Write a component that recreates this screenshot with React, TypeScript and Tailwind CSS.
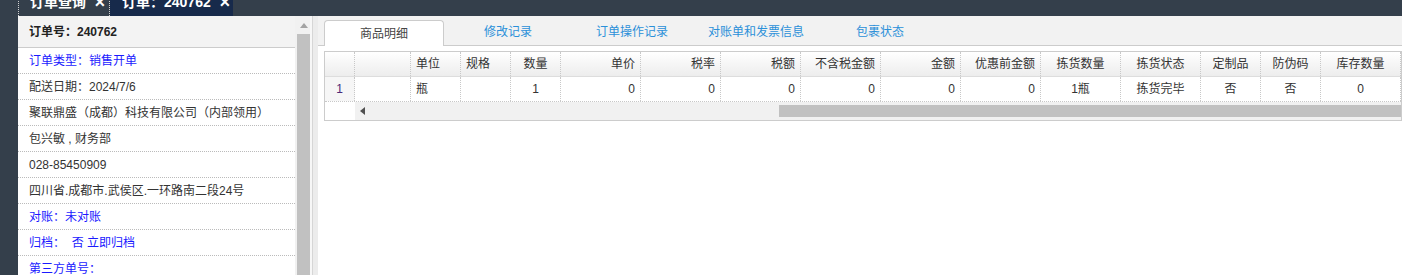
import React from "react";

const font = { fontFamily: '"Liberation Sans", "Noto Sans CJK SC", sans-serif' };

type Col = { title: string; w: string; align: string; value: string };

const cols: Col[] = [
    { title: "", w: "w-[56px]", align: "text-left", value: "" },
    { title: "单位", w: "w-[50px]", align: "text-left", value: "瓶" },
    { title: "规格", w: "w-[50px]", align: "text-left", value: "" },
    { title: "数量", w: "w-[50px]", align: "text-center", value: "1" },
    { title: "单价", w: "w-[80px]", align: "text-right", value: "0" },
    { title: "税率", w: "w-[80px]", align: "text-right", value: "0" },
    { title: "税额", w: "w-[80px]", align: "text-right", value: "0" },
    { title: "不含税金额", w: "w-[80px]", align: "text-right", value: "0" },
    { title: "金额", w: "w-[80px]", align: "text-right", value: "0" },
    { title: "优惠前金额", w: "w-[80px]", align: "text-right", value: "0" },
    { title: "拣货数量", w: "w-[80px]", align: "text-center", value: "1瓶" },
    { title: "拣货状态", w: "w-[80px]", align: "text-center", value: "拣货完毕" },
    { title: "定制品", w: "w-[60px]", align: "text-center", value: "否" },
    { title: "防伪码", w: "w-[60px]", align: "text-center", value: "否" },
    { title: "库存数量", w: "w-[80px]", align: "text-center", value: "0" },
];

const infoRows: { text: string; blue?: boolean }[] = [
    { text: "订单类型：销售开单", blue: true },
    { text: "配送日期：2024/7/6" },
    { text: "聚联鼎盛（成都）科技有限公司（内部领用）" },
    { text: "包兴敏 , 财务部" },
    { text: "028-85450909" },
    { text: "四川省.成都市.武侯区.一环路南二段24号" },
    { text: "对账：未对账", blue: true },
    { text: "归档：  否 立即归档", blue: true },
    { text: "第三方单号：", blue: true },
];

const tabs = ["商品明细", "修改记录", "订单操作记录", "对账单和发票信息", "包裹状态"];

const App = () => {
    return (
        <div className="w-[1402px] h-[275px] overflow-hidden bg-[#343f4b] text-[12px]" style={font}>
            {/* top tabs */}
            <div className="flex h-[16px] items-end overflow-hidden">
                <div className="w-[18px] shrink-0" />
                <div className="flex h-[28px] w-[92px] shrink-0 items-center gap-[8px] whitespace-nowrap border-x border-dotted border-[#d0d0d0] pl-[11px] text-[14px] font-bold leading-[28px] text-white">
                    <span>订单查询</span>
                    <span className="text-[14px]">✕</span>
                </div>
                <div className="flex h-[28px] w-[123px] shrink-0 items-center gap-[8px] whitespace-nowrap bg-[#172a4b] pl-[12px] text-[14px] font-bold leading-[28px] text-white">
                    <span>订单：240762</span>
                    <span className="text-[14px]">✕</span>
                </div>
            </div>

            <div className="flex h-[259px]">
                <div className="w-[18px] shrink-0" />

                {/* left info panel */}
                <div className="flex w-[277px] shrink-0 flex-col overflow-hidden bg-white">
                    <div className="flex h-[32px] shrink-0 items-center border-b border-[#cccccc] bg-[#f3f3f3] pl-[11px] font-bold text-[#222]">
                        订单号：240762
                    </div>
                    {infoRows.map((r, i) => (
                        <div
                            key={i}
                            className={
                                r.blue
                                    ? "flex h-[26px] shrink-0 items-center border-b border-dotted border-[#bbbbbb] pl-[11px] whitespace-pre text-[#1a1aff]"
                                    : "flex h-[26px] shrink-0 items-center border-b border-dotted border-[#bbbbbb] pl-[11px] whitespace-pre text-[#333]"
                            }
                        >
                            {r.text}
                        </div>
                    ))}
                </div>

                {/* left scrollbar */}
                <div className="flex w-[15px] shrink-0 flex-col bg-[#f1f1f1] pl-[2px]">
                    <div className="flex h-[18px] shrink-0 items-center justify-center">
                        <svg width="8" height="5" viewBox="0 0 8 5">
                            <path d="M0 5 L4 0 L8 5 Z" fill="#a3a3a3" />
                        </svg>
                    </div>
                    <div className="flex-1 bg-[#c1c1c1]" />
                </div>

                {/* divider */}
                <div className="flex w-[8px] shrink-0">
                    <div className="w-[2px] bg-[#f7f7f7]" />
                    <div className="w-[1px] bg-[#d6d6d6]" />
                    <div className="flex-1 bg-[#ececec]" />
                </div>

                {/* right panel */}
                <div className="flex flex-1 flex-col bg-white">
                    <div className="flex h-[30px] shrink-0 items-end border-b border-[#cccccc] bg-[#f2f2f2] pl-[6px]">
                        {tabs.map((t, i) =>
                            i === 0 ? (
                                <div
                                    key={t}
                                    className="-mb-px flex h-[26px] w-[120px] items-center justify-center rounded-t-[4px] border border-b-0 border-[#cccccc] bg-white text-[#444]"
                                >
                                    {t}
                                </div>
                            ) : (
                                <div key={t} className="ml-[4px] flex h-[26px] w-[120px] items-center justify-center text-[#2b90d9]">
                                    {t}
                                </div>
                            )
                        )}
                    </div>

                    <div className="pl-[6px] pt-[5px]">
                        <div className="w-[1078px] border border-[#cccccc] text-[#333]">
                            {/* header */}
                            <div className="flex h-[25px] border-b border-[#dddddd] bg-gradient-to-b from-white to-[#ededed]">
                                <div className="w-[30px] shrink-0 border-r border-dotted border-[#c8c8c8]" />
                                {cols.map((c, i) => (
                                    <div
                                        key={i}
                                        className={`${c.w} ${c.align} shrink-0 border-r border-dotted border-[#c8c8c8] px-[5px] leading-[24px]`}
                                    >
                                        {c.title}
                                    </div>
                                ))}
                            </div>
                            {/* data row */}
                            <div className="flex h-[25px] border-b border-dotted border-[#c8c8c8]">
                                <div className="w-[30px] shrink-0 border-r border-dotted border-[#c8c8c8] bg-[#f6f6f6] text-center leading-[24px] text-[#4b2a7a]">
                                    1
                                </div>
                                {cols.map((c, i) => (
                                    <div
                                        key={i}
                                        className={`${c.w} ${c.align} shrink-0 border-r border-dotted border-[#c8c8c8] px-[5px] leading-[24px]`}
                                    >
                                        {c.value}
                                    </div>
                                ))}
                            </div>
                            {/* horizontal scrollbar */}
                            <div className="flex h-[18px]">
                                <div className="w-[30px] shrink-0 bg-white" />
                                <div className="flex flex-1 items-center bg-[#f1f1f1]">
                                    <div className="flex w-[14px] items-center justify-center">
                                        <svg width="5" height="8" viewBox="0 0 5 8">
                                            <path d="M5 0 L0 4 L5 8 Z" fill="#505050" />
                                        </svg>
                                    </div>
                                    <div className="ml-[410px] h-[12px] flex-1 bg-[#c1c1c1]" />
                                </div>
                            </div>
                        </div>
                    </div>
                </div>
            </div>
        </div>
    );
};

export default App;
